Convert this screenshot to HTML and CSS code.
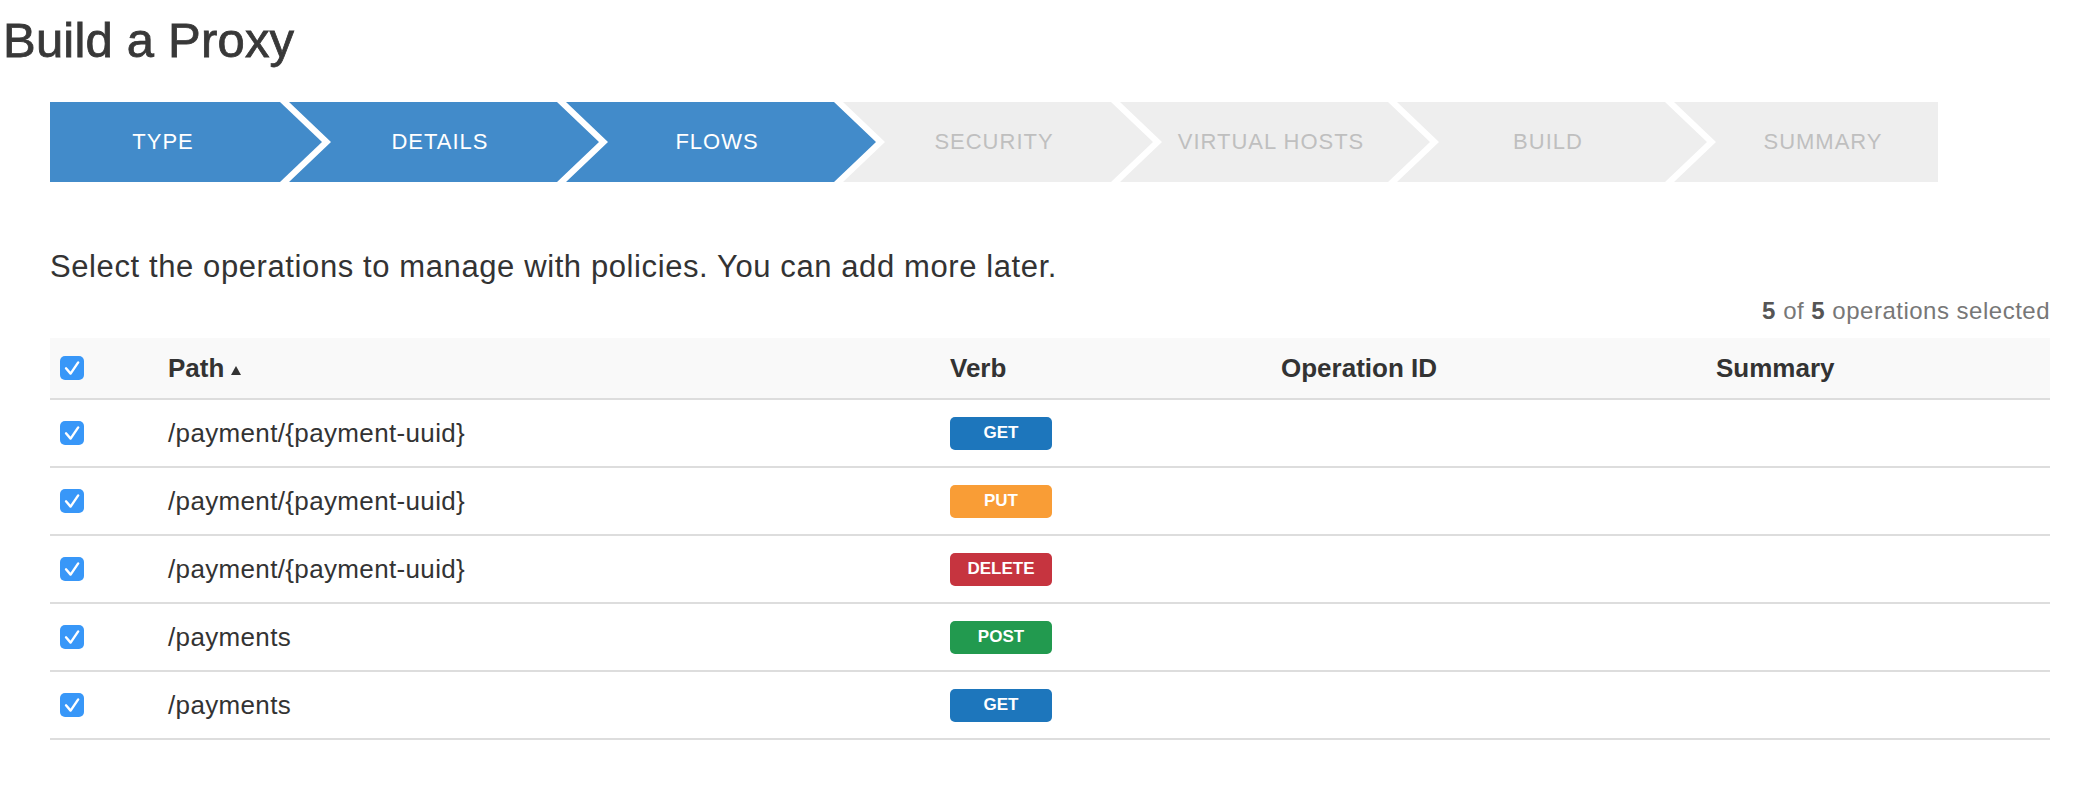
FILE: index.html
```html
<!DOCTYPE html>
<html lang="en">
<head>
<meta charset="utf-8">
<title>Build a Proxy</title>
<link rel="stylesheet" href="styles.css">
</head>
<body>
<h1 class="page-title">Build a Proxy</h1>
<div class="content">
  <ol class="stepper">
    <li class="step is-done">Type</li>
    <li class="step is-done">Details</li>
    <li class="step is-done">Flows</li>
    <li class="step">Security</li>
    <li class="step">Virtual Hosts</li>
    <li class="step">Build</li>
    <li class="step">Summary</li>
  </ol>

  <p class="intro">Select the operations to manage with policies. You can add more later.</p>
  <div class="count"><b>5</b> of <b>5</b> operations selected</div>

  <div class="ops">
    <div class="ops-row ops-head">
      <div class="cell"><svg class="check" viewBox="0 0 24 24" width="24" height="24"><rect width="24" height="24" rx="5" fill="#3897f8"/><path d="M6 12.3 L10.6 17.6 L18.2 6.4" fill="none" stroke="#fff" stroke-width="2.4" stroke-linecap="round" stroke-linejoin="round"/></svg></div>
      <div class="cell">Path<svg class="sort" viewBox="0 0 10 9" width="10" height="9"><path d="M5 0 L10 9 L0 9 Z" fill="#333"/></svg></div>
      <div class="cell">Verb</div>
      <div class="cell">Operation ID</div>
      <div class="cell">Summary</div>
    </div>

    <div class="ops-row">
      <div class="cell"><svg class="check" viewBox="0 0 24 24" width="24" height="24"><rect width="24" height="24" rx="5" fill="#3897f8"/><path d="M6 12.3 L10.6 17.6 L18.2 6.4" fill="none" stroke="#fff" stroke-width="2.4" stroke-linecap="round" stroke-linejoin="round"/></svg></div>
      <div class="cell path">/payment/{payment-uuid}</div>
      <div class="cell"><span class="verb verb-get">GET</span></div>
      <div class="cell"></div>
      <div class="cell"></div>
    </div>

    <div class="ops-row">
      <div class="cell"><svg class="check" viewBox="0 0 24 24" width="24" height="24"><rect width="24" height="24" rx="5" fill="#3897f8"/><path d="M6 12.3 L10.6 17.6 L18.2 6.4" fill="none" stroke="#fff" stroke-width="2.4" stroke-linecap="round" stroke-linejoin="round"/></svg></div>
      <div class="cell path">/payment/{payment-uuid}</div>
      <div class="cell"><span class="verb verb-put">PUT</span></div>
      <div class="cell"></div>
      <div class="cell"></div>
    </div>

    <div class="ops-row">
      <div class="cell"><svg class="check" viewBox="0 0 24 24" width="24" height="24"><rect width="24" height="24" rx="5" fill="#3897f8"/><path d="M6 12.3 L10.6 17.6 L18.2 6.4" fill="none" stroke="#fff" stroke-width="2.4" stroke-linecap="round" stroke-linejoin="round"/></svg></div>
      <div class="cell path">/payment/{payment-uuid}</div>
      <div class="cell"><span class="verb verb-delete">DELETE</span></div>
      <div class="cell"></div>
      <div class="cell"></div>
    </div>

    <div class="ops-row">
      <div class="cell"><svg class="check" viewBox="0 0 24 24" width="24" height="24"><rect width="24" height="24" rx="5" fill="#3897f8"/><path d="M6 12.3 L10.6 17.6 L18.2 6.4" fill="none" stroke="#fff" stroke-width="2.4" stroke-linecap="round" stroke-linejoin="round"/></svg></div>
      <div class="cell path">/payments</div>
      <div class="cell"><span class="verb verb-post">POST</span></div>
      <div class="cell"></div>
      <div class="cell"></div>
    </div>

    <div class="ops-row">
      <div class="cell"><svg class="check" viewBox="0 0 24 24" width="24" height="24"><rect width="24" height="24" rx="5" fill="#3897f8"/><path d="M6 12.3 L10.6 17.6 L18.2 6.4" fill="none" stroke="#fff" stroke-width="2.4" stroke-linecap="round" stroke-linejoin="round"/></svg></div>
      <div class="cell path">/payments</div>
      <div class="cell"><span class="verb verb-get">GET</span></div>
      <div class="cell"></div>
      <div class="cell"></div>
    </div>
  </div>
</div>
</body>
</html>
```

FILE: styles.css
```css
html, body {
  margin: 0;
  padding: 0;
  background: #fff;
}

body {
  font-family: "Liberation Sans", Arial, Helvetica, sans-serif;
  color: #333;
}

.page-title {
  margin: 12px 0 0;
  padding-left: 3px;
  font-size: 49px;
  line-height: 56px;
  font-weight: normal;
  letter-spacing: 0.2px;
  color: #383838;
  -webkit-text-stroke: 0.8px #383838;
}

.content {
  padding: 0 30px 0 50px;
}

/* ---------- stepper ---------- */
.stepper {
  list-style: none;
  margin: 34px 0 0;
  padding: 0;
  display: flex;
  width: 1888px;
  height: 80px;
}

.step {
  flex: none;
  box-sizing: border-box;
  width: 310px;
  height: 80px;
  margin-left: -33px;
  padding-right: 8px;
  display: flex;
  align-items: center;
  justify-content: center;
  background: #eeeeee;
  color: #bfbfbf;
  font-size: 22px;
  letter-spacing: 1px;
  text-transform: uppercase;
  clip-path: polygon(0 0, calc(100% - 42px) 0, 100% 50%, calc(100% - 42px) 100%, 0 100%, 42px 50%);
}

.step:first-child {
  width: 272px;
  margin-left: 0;
  padding-right: 46px;
  clip-path: polygon(0 0, calc(100% - 42px) 0, 100% 50%, calc(100% - 42px) 100%, 0 100%);
}

.step:last-child {
  width: 264px;
  padding: 0 0 0 34px;
  clip-path: polygon(0 0, 100% 0, 100% 100%, 0 100%, 42px 50%);
}

.step.is-done {
  background: #428bca;
  color: #fff;
}

/* ---------- intro ---------- */
.intro {
  margin: 67px 0 0;
  font-size: 31px;
  line-height: 36px;
  letter-spacing: 0.6px;
  color: #333;
}

.count {
  margin-top: 12px;
  text-align: right;
  font-size: 24px;
  line-height: 28px;
  letter-spacing: 0.5px;
  color: #777;
}

.count b {
  color: #555;
}

/* ---------- operations table ---------- */
.ops {
  margin-top: 13px;
}

.ops-row {
  display: grid;
  grid-template-columns: 108px 782px 331px 435px 1fr;
  align-items: center;
  height: 66px;
  border-bottom: 2px solid #dddddd;
  font-size: 26px;
  letter-spacing: 0.35px;
  color: #333;
}

.ops-head {
  height: 60px;
  background: #f9f9f9;
  font-weight: bold;
  letter-spacing: 0;
}

.cell {
  padding: 0 10px;
  display: flex;
  align-items: center;
}

.check {
  display: block;
}

.sort {
  margin-left: 7px;
  align-self: flex-end;
  margin-bottom: 9px;
}

.verb {
  display: inline-flex;
  align-items: center;
  justify-content: center;
  width: 102px;
  height: 33px;
  border-radius: 5px;
  color: #fff;
  font-size: 17px;
  font-weight: bold;
  letter-spacing: 0;
}

.verb-get { background: #1d76bc; }
.verb-put { background: #f99d36; }
.verb-delete { background: #c6343f; }
.verb-post { background: #229a4f; }
```
